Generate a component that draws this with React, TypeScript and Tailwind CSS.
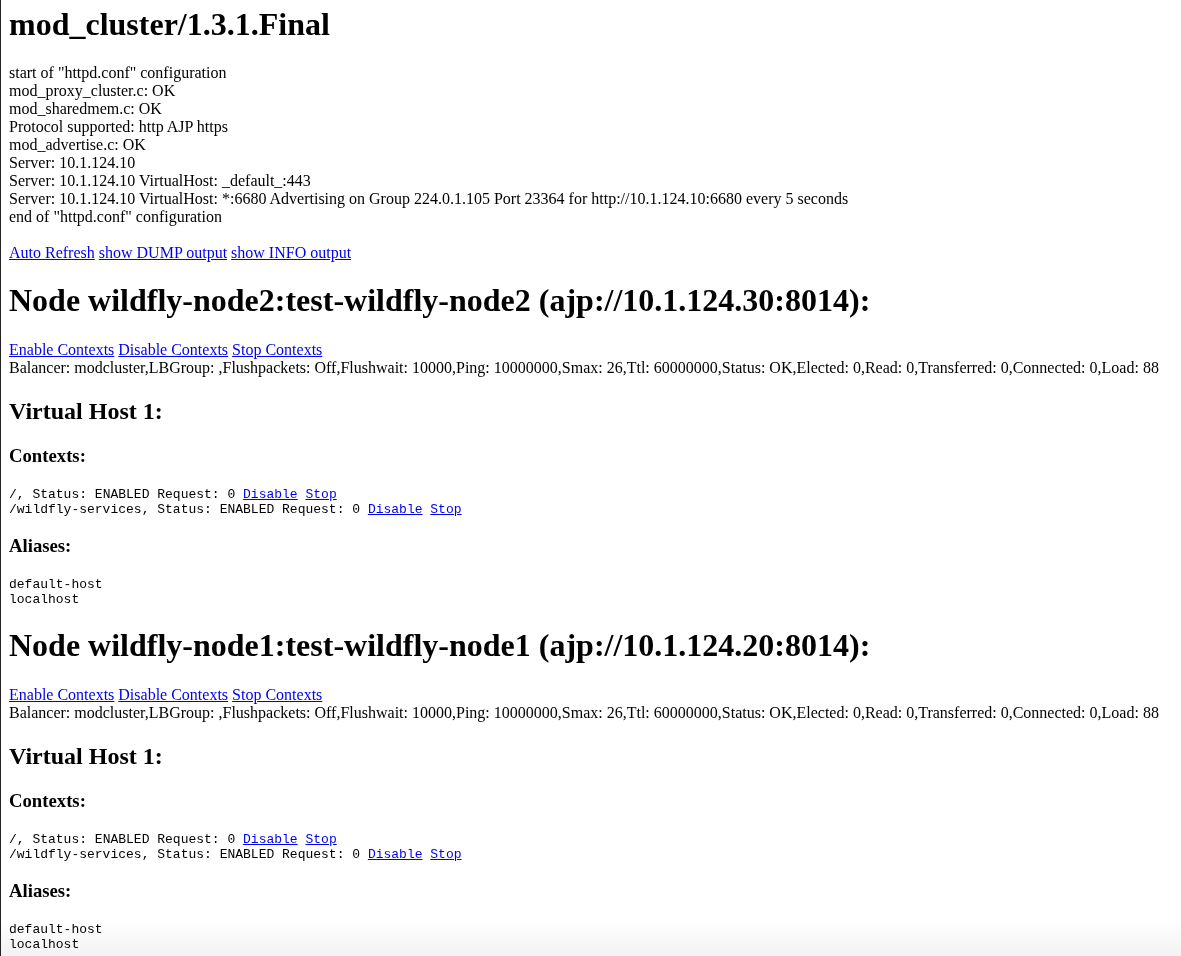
import React from 'react';

const serif = "font-['Liberation_Serif',serif]";
const mono = "font-['Liberation_Mono',monospace]";

interface NodeInfo {
  name: string;
  route: string;
  address: string;
}

const nodes: NodeInfo[] = [
  { name: 'wildfly-node2', route: 'test-wildfly-node2', address: 'ajp://10.1.124.30:8014' },
  { name: 'wildfly-node1', route: 'test-wildfly-node1', address: 'ajp://10.1.124.20:8014' },
];

const configLines = [
  'start of "httpd.conf" configuration',
  'mod_proxy_cluster.c: OK',
  'mod_sharedmem.c: OK',
  'Protocol supported: http AJP https',
  'mod_advertise.c: OK',
  'Server: 10.1.124.10',
  'Server: 10.1.124.10 VirtualHost: _default_:443',
  'Server: 10.1.124.10 VirtualHost: *:6680 Advertising on Group 224.0.1.105 Port 23364 for http://10.1.124.10:6680 every 5 seconds',
  'end of "httpd.conf" configuration',
];

const Link: React.FC<{ children: React.ReactNode }> = ({ children }) => (
  <a href="#" className="text-[#0000ee] underline">
    {children}
  </a>
);

const contexts = ['/', '/wildfly-services'];

const NodeSection: React.FC<{ node: NodeInfo }> = ({ node }) => (
  <div>
    <h1 className="text-[32px] font-bold leading-[37px] mt-[20px] mb-[22px]">
      Node {node.name}:{node.route} ({node.address}):
    </h1>
    <div className="text-[16px] leading-[18px]">
      <Link>Enable Contexts</Link> <Link>Disable Contexts</Link> <Link>Stop Contexts</Link>
      <br />
      Balancer: modcluster,LBGroup: ,Flushpackets: Off,Flushwait: 10000,Ping: 10000000,Smax: 26,Ttl: 60000000,Status: OK,Elected: 0,Read: 0,Transferred: 0,Connected: 0,Load: 88
    </div>
    <h2 className="text-[24px] font-bold leading-[28px] mt-[20px] mb-[20px]">Virtual Host 1:</h2>
    <h3 className="text-[18.72px] font-bold leading-[22px] mb-[20px]">Contexts:</h3>
    <pre className={`${mono} text-[13px] leading-[15px] whitespace-pre`}>
      {contexts.map((c) => (
        <div key={c}>
          {c}, Status: ENABLED Request: 0 <Link>Disable</Link> <Link>Stop</Link>
        </div>
      ))}
    </pre>
    <h3 className="text-[18.72px] font-bold leading-[22px] mt-[18px] mb-[20px]">Aliases:</h3>
    <pre className={`${mono} text-[13px] leading-[15px] whitespace-pre`}>
      <div>default-host</div>
      <div>localhost</div>
    </pre>
  </div>
);

export default function App() {
  return (
    <div className={`${serif} min-h-screen text-black border-l border-[#222] pl-2 pt-[6px] overflow-hidden`}>
      <div className="pointer-events-none fixed bottom-0 left-0 right-0 -z-10 h-[34px] bg-linear-to-b from-white to-[#f2f2f2]" />
      <h1 className="text-[32px] font-bold leading-[37px] mb-[21px]">mod_cluster/1.3.1.Final</h1>
      <div className="text-[16px] leading-[18px]">
        {configLines.map((line) => (
          <div key={line}>{line}</div>
        ))}
        <br />
        <Link>Auto Refresh</Link> <Link>show DUMP output</Link> <Link>show INFO output</Link>
      </div>
      {nodes.map((n) => (
        <NodeSection key={n.name} node={n} />
      ))}
    </div>
  );
}
